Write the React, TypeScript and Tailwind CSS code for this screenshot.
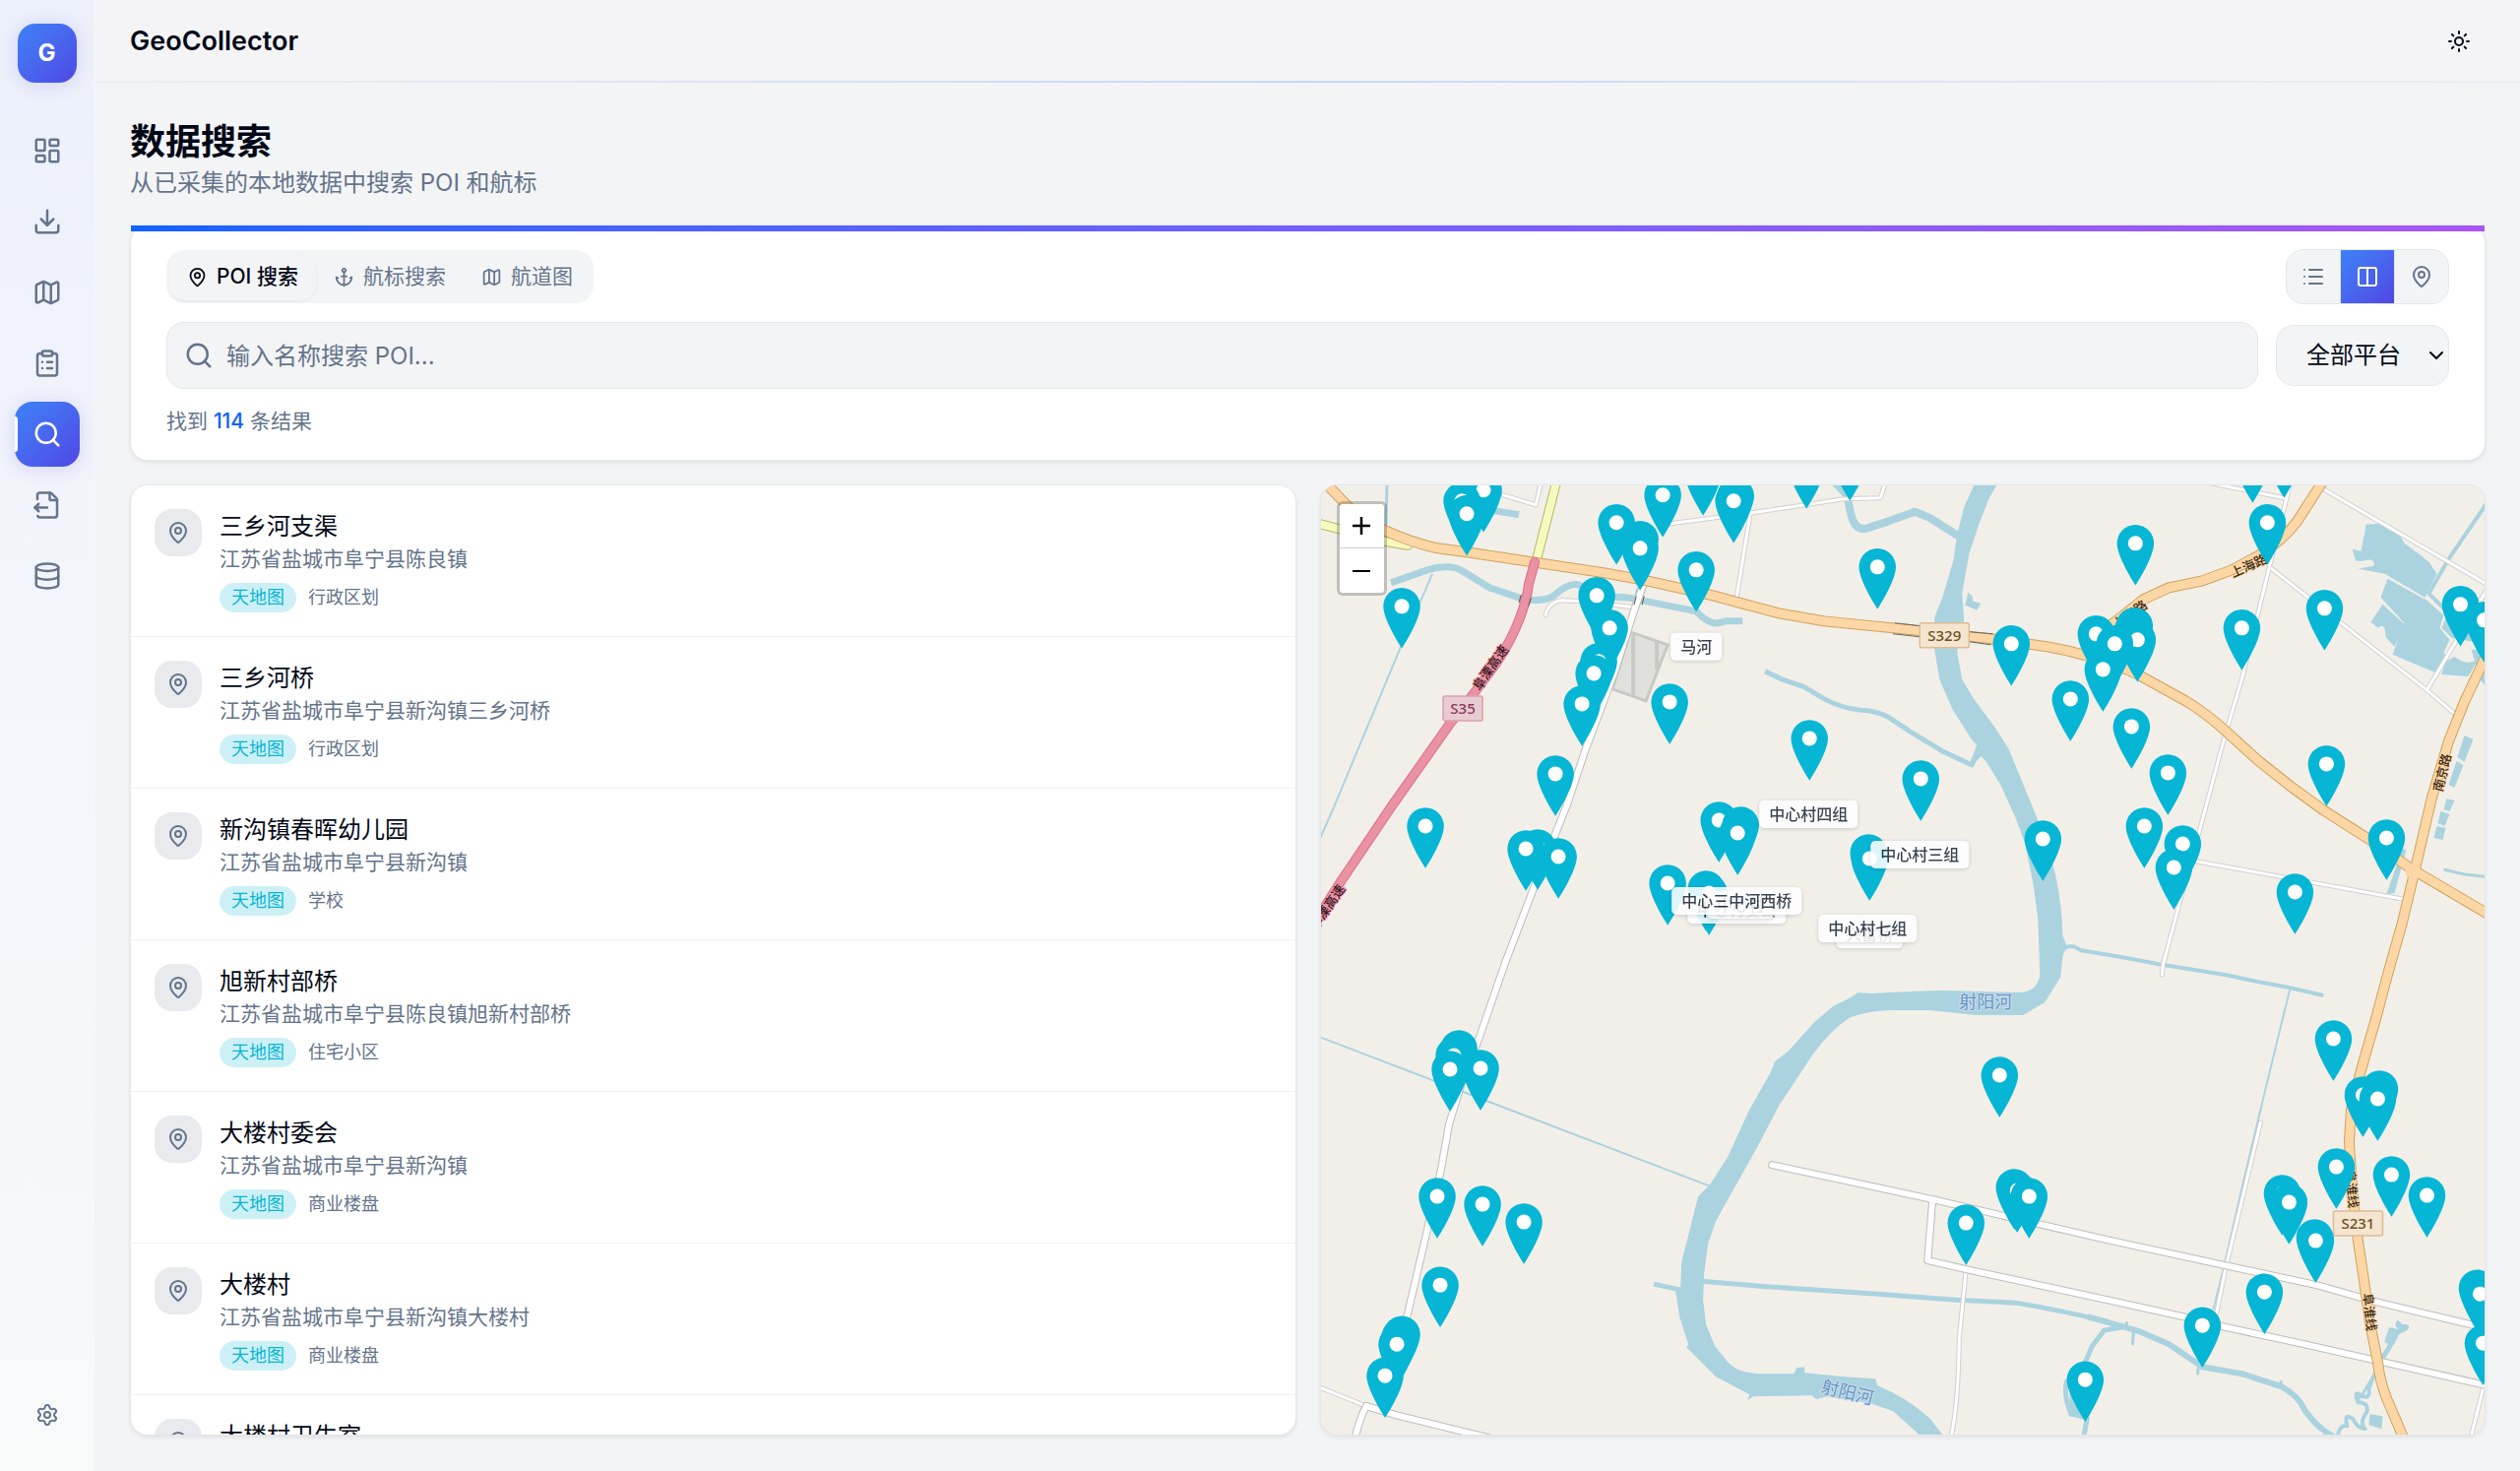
import { useState } from 'react';
import {
  Anchor,
  ChevronDown,
  ClipboardList,
  Columns2,
  Database,
  Download,
  FileOutput,
  LayoutDashboard,
  List,
  Map as MapIcon,
  MapPin,
  Search,
  Settings,
  Sun,
} from 'lucide-react';

const navItems = [
  { label: '仪表盘', icon: LayoutDashboard },
  { label: '数据采集', icon: Download },
  { label: '地图', icon: MapIcon },
  { label: '任务', icon: ClipboardList },
  { label: '数据搜索', icon: Search },
  { label: '导出', icon: FileOutput },
  { label: '数据库', icon: Database },
];

const results = [
  { name: '三乡河支渠', address: '江苏省盐城市阜宁县陈良镇', category: '行政区划' },
  { name: '三乡河桥', address: '江苏省盐城市阜宁县新沟镇三乡河桥', category: '行政区划' },
  { name: '新沟镇春晖幼儿园', address: '江苏省盐城市阜宁县新沟镇', category: '学校' },
  { name: '旭新村部桥', address: '江苏省盐城市阜宁县陈良镇旭新村部桥', category: '住宅小区' },
  { name: '大楼村委会', address: '江苏省盐城市阜宁县新沟镇', category: '商业楼盘' },
  { name: '大楼村', address: '江苏省盐城市阜宁县新沟镇大楼村', category: '商业楼盘' },
  { name: '大楼村卫生室', address: '江苏省盐城市阜宁县新沟镇', category: '医疗' },
];

// Centre of each pin's dot, in map coordinates
const pins: [number, number][] = [
  [1485, 509], [1507, 498], [1490, 522], [1689, 503], [1642, 531], [1666, 548], [1666, 557],
  [1723, 579], [1424, 616], [1622, 605], [1635, 638], [1624, 672], [1619, 684], [1607, 715],
  [1696, 713], [1580, 786], [1730, 481], [1763, 504], [1761, 509], [1835, 474], [1879, 466],
  [1907, 576], [2043, 654], [1838, 750], [1951, 791], [1746, 833], [1768, 838], [1765, 846],
  [2075, 852], [1898, 866], [1899, 872], [1694, 897], [1733, 903], [1736, 907], [1448, 839],
  [1550, 862], [1562, 861], [1583, 870], [1473, 1086], [1504, 1085], [1477, 1072], [1482, 1065],
  [1460, 1215], [1506, 1223], [1548, 1241], [1463, 1305], [1419, 1365], [1424, 1355], [1422, 1358],
  [1407, 1397], [2288, 468], [2320, 463], [2303, 531], [2169, 552], [2361, 618], [2499, 614],
  [2523, 630], [2277, 638], [2129, 644], [2171, 650], [2168, 636], [2166, 641], [2148, 654],
  [2136, 680], [2103, 710], [2165, 738], [2202, 785], [2363, 776], [2178, 839], [2217, 857],
  [2208, 881], [2424, 851], [2331, 906], [2370, 1055], [2400, 1112], [2417, 1106], [2415, 1116],
  [2373, 1185], [2429, 1193], [2465, 1214], [2318, 1212], [2325, 1221], [2352, 1260], [2351, 1257],
  [2300, 1312], [2237, 1346], [2118, 1401], [2519, 1314], [2516, 1308], [2522, 1364], [2031, 1092],
  [1997, 1242], [2046, 1206], [2049, 1209], [2061, 1215],
];

const placeLabels = [
  { x: 1697, y: 643, text: '马河' },
  { x: 1787, y: 813, text: '中心村四组' },
  { x: 1900, y: 854, text: '中心村三组' },
  { x: 1865, y: 935, text: '兴富桥' },
  { x: 1847, y: 929, text: '中心村七组' },
  { x: 1714, y: 910, text: '中心村委会' },
  { x: 1734, y: 905, text: '中心村' },
  { x: 1698, y: 901, text: '中心三中河西桥' },
];

const trunkRoads = [
  'M1342 486L1365 510Q1385 532 1407 539Q1433 551 1460 557L1490 561L1557 571L1630 582L1673 590L1740 605L1773 614L1807 623L1853 631L1923 638L1973 643L2023 649L2080 657Q2120 664 2160 680L2173 686L2220 712Q2240 724 2260 742L2293 772L2327 799L2360 823L2407 853L2450 883L2540 936',
  'M2360 488L2333 530Q2320 548 2293 565L2267 579L2237 590L2203 597L2177 609L2157 625L2137 640L2125 666',
  'M2528 660L2503 713L2487 753L2470 810L2452 887L2440 937L2425 990L2413 1035L2398 1087L2388 1127L2386 1160L2389 1207L2395 1260L2400 1293L2407 1343L2415 1383Q2417 1402 2424 1420L2442 1462',
];

const motorway =
  'M1559 571L1553 593Q1551 610 1543 630Q1535 651 1519 675L1496 706L1473 735L1413 820L1363 894L1336 936';

const mainRoads = [
  'M1670 592L1660 620L1640 683L1610 763L1592 817L1558 902L1530 975L1503 1053L1484 1102L1472 1142L1464 1187L1449 1253L1430 1334L1410 1412',
  'M1800 1183L1963 1218L2140 1259L2260 1285L2353 1305L2413 1322L2530 1350',
  'M1963 1218L1958 1280L1997 1289L2140 1320L2217 1337L2257 1347L2340 1365L2530 1408',
  'M1388 1428L1418 1437L1520 1462',
  'M1388 1428Q1382 1438 1376 1462',
];

const minorRoads = [
  'M1683 540L1670 597',
  'M1697 532L1780 521L1873 507L1910 506L1916 488',
  'M1778 521L1764 607',
  'M1527 503L1560 513L1566 488',
  'M1570 625Q1573 611 1587 610L1607 611L1660 617',
  'M1336 1407L1388 1428',
  'M1997 1289L1990 1360Q1989 1430 1981 1462',
  'M2296 1140L2261 1286L2251 1335',
  'M2522 1410L2509 1462',
  'M2327 488L2305 576L2277 690L2260 747L2235 840L2213 920L2197 980L2196 990',
  'M2305 576L2465 701L2492 724',
  'M2360 497L2530 596',
  'M2530 592L2465 701',
  'M2232 875L2440 913',
  'M2240 490L2320 506',
];

const streams = [
  { w: 8, d: 'M1862 488L1876 503L1880 522Q1884 539 1895 537L1917 530L1945 520L1960 526L1990 545' },
  { w: 5, d: 'M1793 682L1810 690L1833 698L1853 710Q1870 719 1888 721Q1912 722 1925 733L1940 743L1973 763L2003 777L2010 758' },
  { w: 7, d: 'M1413 592L1450 579Q1475 572 1487 581L1513 597L1543 607Q1570 614 1581 603Q1596 590 1606 595L1623 606L1653 607L1673 611L1723 621Q1735 634 1745 633L1753 631L1770 631' },
  { w: 7, d: 'M1518 519L1543 523' },
  { w: 3, d: 'M1409 490L1408 533' },
  { w: 2, d: 'M1455 583L1423 657L1355 820L1340 854' },
  { w: 2, d: 'M1340 1053L1738 1205' },
  { w: 3, d: 'M1664 597L1655 630' },
  { w: 5, d: 'M1680 1304L1712 1311' },
  { w: 5, d: 'M1728 1301L1787 1306L1907 1314L1987 1320L2047 1323Q2090 1330 2140 1342' },
  { w: 6, d: 'M2120 1337L2173 1352L2203 1365L2237 1388L2277 1395L2317 1408Q2334 1417 2341 1432Q2355 1452 2374 1461' },
  { w: 5, d: 'M2155 1348L2137 1351L2125 1367L2116 1388L2099 1403Q2096 1420 2104 1436L2120 1440L2116 1462' },
  { w: 3, d: 'M2167 1353L2166 1366M2160 1342L2160 1350M2233 1388L2232 1396M2317 1402L2316 1408' },
  { w: 4, d: 'M2095 965Q2103 957 2113 965L2160 973L2197 980L2260 990L2293 997L2325 1003L2360 1011' },
  { w: 2, d: 'M2326 1004L2313 1057L2296 1127L2277 1207L2258 1290L2248 1330' },
  { w: 4, d: 'M2528 508L2487 568L2467 603L2490 626' },
  { w: 3, d: 'M2482 883L2503 888L2530 891' },
  { w: 3, d: 'M2420 1377L2411 1397L2400 1415L2394 1422' },
];

const riverBody =
  'M2005 493L1995 515L1988 543L1984 570L1973 607L1965 627L1965 660L1970 690L1983 720L2002 750L2008 757L2007 774L2012 768L2017 773L2032 797L2047 830L2057 857L2065 897L2070 933L2072 990Q2070 1006 2053 1008L1973 1006L1940 1007L1900 1009L1887 1008L1880 1013L1862 1022L1843 1038L1817 1067L1803 1078L1798 1090L1777 1127L1755 1175L1737 1203L1725 1215L1718 1243L1708 1282L1707 1308L1702 1311L1706 1337L1715 1365L1713 1368L1743 1398L1777 1416L1775 1422L1781 1418L1840 1417L1845 1421L1856 1418L1900 1425L1923 1433L1955 1462L1977 1462L1960 1440Q1935 1418 1907 1407L1905 1400L1873 1398L1833 1394L1833 1388L1825 1389L1822 1395L1790 1395Q1765 1395 1755 1383L1742 1367L1733 1345L1730 1320L1731 1293L1735 1263L1743 1240L1767 1197L1785 1165L1807 1123L1840 1073Q1860 1045 1880 1033Q1900 1026 1923 1026L1960 1026L2007 1031L2055 1031L2077 1018L2093 992L2095 972L2099 960L2095 950Q2094 890 2070 833L2040 760L2025 737L2005 710L1993 690L1988 663L1990 647L1995 630L1993 603L2000 563L2010 533L2020 507L2028 493Z';

// Lakes and fish ponds east of the town
const ponds = [
  'M2403 533L2418 532L2438 545L2442 552L2457 563L2467 571L2475 583L2463 607L2422 583L2395 578L2411 575Q2413 566 2400 570L2393 570L2389 558L2398 560L2402 540Z',
  'M2425 588L2465 610L2482 625L2478 638L2488 650L2482 663L2487 670L2473 683L2430 665L2442 633L2418 607Z',
  'M2480 638L2485 626L2506 634L2512 652L2490 648Z',
  'M2420 614L2443 635L2432 657L2423 647Q2423 631 2415 638L2408 632Z',
  'M2483 673L2493 667Q2505 677 2517 670L2507 687L2480 685Z',
  'M2503 747L2512 751L2503 774L2496 769ZM2495 773L2502 777L2493 800L2487 797ZM2485 811L2493 813L2488 824L2482 822ZM2479 824L2488 827L2483 839L2476 836ZM2475 839L2484 841L2481 853L2472 851Z',
  'M2440 862L2444 863L2432 907L2424 908Z',
  'M2510 660L2530 660L2530 704L2519 690Z',
  'M1999 602L2003 605L2004 611L2012 613L2008 620L1996 615Z',
  'M2103 1405L2120 1430L2118 1440L2101 1438Z',
  'M2407 1436L2420 1438L2419 1451L2406 1447Z',
];

const Pin = ({ x, y }: { x: number; y: number }) => (
  <g transform={`translate(${x - 18.75} ${y - 18.75}) scale(1.5)`}>
    <path
      d="M12.5 0C5.6 0 0 5.6 0 12.5C0 21.9 12.5 41 12.5 41S25 21.9 25 12.5C25 5.6 19.4 0 12.5 0Z"
      fill="#06b6d4"
    />
    <circle cx="12.5" cy="12.5" r="5" fill="#fff" />
  </g>
);

const RoadShield = ({ x, y, w, text, pink }: { x: number; y: number; w: number; text: string; pink?: boolean }) => (
  <g>
    <rect
      x={x}
      y={y}
      width={w}
      height="25"
      rx="2"
      fill={pink ? '#e9ccd2' : '#f5e4d0'}
      stroke={pink ? '#d9a0ae' : '#dcbb94'}
      strokeWidth="1.5"
    />
    <text
      x={x + w / 2}
      y={y + 18}
      textAnchor="middle"
      fontSize="15"
      fontWeight="500"
      fill={pink ? '#8b3a5b' : '#6e4f20'}
    >
      {text}
    </text>
  </g>
);

const MapCanvas = () => (
  <svg
    viewBox="1342 493 1182 964"
    preserveAspectRatio="xMidYMid slice"
    className="block h-full w-full font-['Noto_Sans','Noto_Sans_CJK_SC',sans-serif]"
    role="img"
    aria-label="POI 地图"
  >
    <rect x="1342" y="493" width="1182" height="964" fill="#f2efe9" />

    {/* Water */}
    <path d={riverBody} fill="#aad3df" />
    {ponds.map((d) => (
      <path key={d} d={d} fill="#aad3df" />
    ))}
    <g fill="none" stroke="#aad3df" strokeLinejoin="round">
      {streams.map((s) => (
        <path key={s.d} d={s.d} strokeWidth={s.w} />
      ))}
      <path
        d="M2437 1342Q2433 1348 2440 1347Q2448 1347 2441 1350L2434 1353L2428 1366L2420 1379"
        strokeWidth="5"
      />
      <path d="M2428 1350L2436 1352L2430 1364L2424 1362Z" strokeWidth="4" fill="#aad3df" />
      <path
        d="M2411 1397L2406 1410Q2408 1422 2398 1417Q2390 1411 2395 1424Q2406 1424 2404 1434Q2396 1444 2402 1451Q2394 1450 2390 1441Q2380 1434 2384 1448Q2376 1446 2374 1460"
        strokeWidth="4"
      />
    </g>

    {/* Parking lot */}
    <path d="M1656 642L1694 655L1672 712L1638 700Z" fill="#e0e0dc" stroke="#c8c8c4" strokeWidth="3" />
    <path d="M1659 645V706M1683 652V680" stroke="#c8c8c4" strokeWidth="4" />

    {/* Streets: casing first, then fill */}
    <g fill="none" strokeLinejoin="round" strokeLinecap="round">
      {minorRoads.map((d) => (
        <path key={d} d={d} stroke="#d0d0d0" strokeWidth="5" />
      ))}
      {minorRoads.map((d) => (
        <path key={d} d={d} stroke="#fff" strokeWidth="3" />
      ))}
      {mainRoads.map((d) => (
        <path key={d} d={d} stroke="#bdbdbd" strokeWidth="8" />
      ))}
      {mainRoads.map((d) => (
        <path key={d} d={d} stroke="#fff" strokeWidth="6" />
      ))}
      <path d="M1582 486L1560 572M1336 531L1407 550L1430 554" stroke="#b5b567" strokeWidth="10" />
      <path d="M1582 486L1560 572M1336 531L1407 550L1430 554" stroke="#f7fabf" strokeWidth="8" />
      {trunkRoads.map((d) => (
        <path key={d} d={d} stroke="#cda35e" strokeWidth="11" />
      ))}
      {trunkRoads.map((d) => (
        <path key={d} d={d} stroke="#fcd6a4" strokeWidth="9" />
      ))}
      <circle cx="2450" cy="885" r="7" fill="#fcd6a4" />
      <path d={motorway} stroke="#e06d8c" strokeWidth="10" />
      <path d={motorway} stroke="#e892a2" strokeWidth="8" />
      <path d="M1545 605L1543 612M1555 608L1553 615M1662 606L1660 614M1670 606L1668 614" stroke="#555" strokeWidth="1" />
      <path d="M1925 633L1951 636M1923 644L1950 647M2000 642L2024 644M2000 652L2022 655" stroke="#666" strokeWidth="1" />
    </g>

    {/* Street and river names */}
    <g textAnchor="middle" fontSize="13" fontWeight="500" fill="#3b2a16" stroke="#fcd6a4" strokeWidth="2" paintOrder="stroke">
      <text transform="translate(2286 579) rotate(-24)">上海路</text>
      <text transform="translate(2166 628) rotate(-35)">上海路</text>
      <text transform="translate(2485 786) rotate(-76)">南京路</text>
      <text transform="translate(2402 1333) rotate(84)">阜淮线</text>
      <text transform="translate(2384 1208) rotate(84)">阜淮线</text>
    </g>
    <g textAnchor="middle" fontSize="13" fontWeight="500" fill="#3a1420" stroke="#e892a2" strokeWidth="2" paintOrder="stroke">
      <text transform="translate(1518 681) rotate(-55)">阜溧高速</text>
      <text transform="translate(1352 924) rotate(-55)">阜溧高速</text>
    </g>
    <g textAnchor="middle" fontSize="18" fill="#6a94c8" stroke="#c9dfe9" strokeWidth="2" paintOrder="stroke">
      <text x="2017" y="1024">射阳河</text>
      <text transform="translate(1875 1420) rotate(14)">射阳河</text>
    </g>

    <RoadShield x={1466} y={707} w={40} text="S35" pink />
    <RoadShield x={1950} y={633} w={50} text="S329" />
    <RoadShield x={2370} y={1230} w={50} text="S231" />

    {[...pins].sort((a, b) => a[1] - b[1]).map(([x, y]) => (
      <Pin key={`${x}-${y}`} x={x} y={y} />
    ))}

    {placeLabels.map(({ x, y, text }) => {
      const width = text.length * 16 + 20;
      return (
        <g key={text} opacity="0.87" className="drop-shadow-[0_1px_2px_rgba(0,0,0,0.18)]">
          <rect x={x} y={y} width={width} height="28" rx="5" fill="#fff" />
          <text x={x + width / 2} y={y + 20} textAnchor="middle" fontSize="16" fontWeight="500" fill="#1e293b">
            {text}
          </text>
        </g>
      );
    })}
  </svg>
);

const Sidebar = () => (
  <aside className="flex w-24 shrink-0 flex-col items-center border-r border-[#f5f7fb] bg-gradient-to-b from-[#ecf0fa] via-[#f1f4fb] via-35% to-[#f7faf9] pt-6 pb-[27px]">
    <div className="flex size-15 items-center justify-center rounded-[18px] bg-gradient-to-br from-[#3b82f6] to-[#4f46e5] text-2xl font-bold text-white shadow-[0_2px_18px_rgba(79,70,229,0.18)]">
      G
    </div>
    <nav className="mt-9 flex flex-1 flex-col gap-1.5">
      {navItems.map(({ label, icon: Icon }) => {
        const active = label === '数据搜索';
        return (
          <a
            key={label}
            href="#"
            aria-label={label}
            className={
              active
                ? 'relative flex size-[66px] items-center justify-center rounded-[18px] bg-gradient-to-br from-[#3b82f6] to-[#4f46e5] text-white shadow-[0_2px_18px_rgba(79,70,229,0.18)]'
                : 'flex size-[66px] items-center justify-center rounded-[18px] text-[#64748b]'
            }
          >
            {active && <span className="absolute top-1/2 left-0 h-9 w-[3px] -translate-y-1/2 rounded-r-full bg-white" />}
            <Icon size={30} />
          </a>
        );
      })}
    </nav>
    <button type="button" aria-label="设置" className="flex size-15 items-center justify-center text-[#64748b]">
      <Settings size={24} />
    </button>
  </aside>
);

const ResultRow = ({ name, address, category }: { name: string; address: string; category: string }) => (
  <li className="flex gap-[18px] border-b border-[#f0f2f4] p-6">
    <span className="flex size-12 shrink-0 items-center justify-center rounded-[18px] bg-[#e8eaee] text-[#64748b]">
      <MapPin size={24} />
    </span>
    <div>
      <h3 className="text-2xl leading-9 font-normal">{name}</h3>
      <p className="text-[21px] leading-[30px] text-[#64748b]">{address}</p>
      <div className="mt-[9px] flex items-center gap-3 text-lg leading-[30px]">
        <span className="rounded-full bg-[#cdf0f6] px-3 text-[#06b6d4]">天地图</span>
        <span className="text-[#64748b]">{category}</span>
      </div>
    </div>
  </li>
);

const tabs = [
  { label: 'POI 搜索', icon: MapPin },
  { label: '航标搜索', icon: Anchor },
  { label: '航道图', icon: MapIcon },
];

const views = [
  { label: '列表', icon: List },
  { label: '分栏', icon: Columns2 },
  { label: '地图', icon: MapPin },
];

export default function App() {
  const [tab, setTab] = useState('POI 搜索');
  const [view, setView] = useState('分栏');
  const [query, setQuery] = useState('');

  return (
    <div className="flex h-screen overflow-hidden bg-[#f3f4f6] font-['Inter','Noto_Sans_CJK_SC',sans-serif] text-[#020817]">
      <Sidebar />

      <div className="flex min-w-0 flex-1 flex-col">
        <header className="flex h-21 shrink-0 items-center justify-between bg-[#f4f4f7] pr-[50px] pl-9">
          <span className="text-[27px] leading-9 font-semibold">GeoCollector</span>
          <button type="button" aria-label="切换主题">
            <Sun size={24} />
          </button>
        </header>
        <div className="-mt-0.5 h-0.5 shrink-0 bg-gradient-to-r from-[#eeeff2] via-[#c5d8f6] to-[#eeeff2]" />

        <main className="flex min-h-0 flex-1 flex-col pt-9 pr-[35px] pb-9 pl-9">
          <h1 className="text-4xl leading-[48px] font-bold">数据搜索</h1>
          <p className="text-2xl leading-9 text-[#64748b]">从已采集的本地数据中搜索 POI 和航标</p>

          <section className="relative mt-6 rounded-[18px] border border-[#e4e7ec] bg-white px-9 py-6 shadow-[0_2px_4px_rgba(0,0,0,0.08)]">
            <div className="absolute inset-x-0 top-0 h-1.5 bg-gradient-to-r from-[#0f62fe] to-[#a855f7]" />

            <div className="flex items-center justify-between">
              <div role="tablist" className="flex rounded-[18px] bg-[#f3f4f6] p-[3px]">
                {tabs.map(({ label, icon: Icon }) => (
                  <button
                    key={label}
                    type="button"
                    role="tab"
                    aria-selected={tab === label}
                    onClick={() => setTab(label)}
                    className={
                      tab === label
                        ? 'flex h-12 items-center gap-[9px] rounded-[15px] px-[18px] text-[21px] font-medium shadow-[0_1px_3px_rgba(0,0,0,0.06)]'
                        : 'flex h-12 items-center gap-[9px] rounded-[15px] px-[18px] text-[21px] text-[#64748b]'
                    }
                  >
                    <Icon size={21} />
                    {label}
                  </button>
                ))}
              </div>

              <div className="flex divide-x divide-[#e4e7ec] overflow-hidden rounded-[18px] border border-[#e4e7ec] bg-[#f3f4f6]">
                {views.map(({ label, icon: Icon }) => (
                  <button
                    key={label}
                    type="button"
                    aria-label={label}
                    aria-pressed={view === label}
                    onClick={() => setView(label)}
                    className={
                      view === label
                        ? 'flex h-[54px] w-[55px] items-center justify-center bg-gradient-to-br from-[#3b82f6] to-[#4f46e5] text-white last:w-[54px]'
                        : 'flex h-[54px] w-[55px] items-center justify-center text-[#64748b] last:w-[54px]'
                    }
                  >
                    <Icon size={24} />
                  </button>
                ))}
              </div>
            </div>

            <div className="mt-[18px] flex items-center gap-[18px]">
              <div className="relative flex-1">
                <Search size={30} className="absolute top-1/2 left-[18px] -translate-y-1/2 text-[#64748b]" />
                <input
                  type="text"
                  aria-label="搜索 POI"
                  placeholder="输入名称搜索 POI..."
                  value={query}
                  onChange={(e) => setQuery(e.target.value)}
                  className="block h-[68px] w-full rounded-[18px] border border-[#e4e7ec] bg-[#f3f4f6] pr-6 pl-15 text-2xl outline-none placeholder:text-[#64748b]"
                />
              </div>
              <div className="relative">
                <select
                  aria-label="平台"
                  className="block h-[62px] w-44 appearance-none rounded-[18px] border border-[#e4e7ec] bg-[#f3f4f6] pl-[30px] text-2xl outline-none"
                >
                  <option>全部平台</option>
                  <option>天地图</option>
                </select>
                <ChevronDown size={24} className="pointer-events-none absolute top-1/2 right-px -translate-y-1/2" />
              </div>
            </div>

            <p className="mt-[18px] text-[21px] leading-[30px] text-[#64748b]">
              找到 <span className="font-medium text-[#0f62fe]">114</span> 条结果
            </p>
          </section>

          <div className="mt-6 grid min-h-0 flex-1 grid-cols-2 gap-6">
            <section className="min-h-0 overflow-hidden rounded-[18px] border border-[#e4e7ec] bg-white shadow-[0_2px_4px_rgba(0,0,0,0.08)]">
              <ul>
                {results.map((r) => (
                  <ResultRow key={r.name} {...r} />
                ))}
              </ul>
            </section>

            <section className="relative min-h-0 overflow-hidden rounded-[18px] border border-[#e4e7ec] bg-[#f2efe9] shadow-[0_2px_4px_rgba(0,0,0,0.08)]">
              <MapCanvas />
              <div className="absolute top-4 left-4 flex flex-col divide-y divide-[#ccc] rounded-md border-[3px] border-black/20 bg-white bg-clip-padding">
                <button type="button" aria-label="放大" className="flex size-[45px] items-center justify-center">
                  <svg viewBox="0 0 18 18" className="size-[18px]" stroke="#000" strokeWidth="2.5">
                    <path d="M0 9H18M9 0V18" />
                  </svg>
                </button>
                <button type="button" aria-label="缩小" className="flex size-[45px] items-center justify-center">
                  <svg viewBox="0 0 18 18" className="size-[18px]" stroke="#000" strokeWidth="2">
                    <path d="M0 9H18" />
                  </svg>
                </button>
              </div>
            </section>
          </div>
        </main>
      </div>
    </div>
  );
}
